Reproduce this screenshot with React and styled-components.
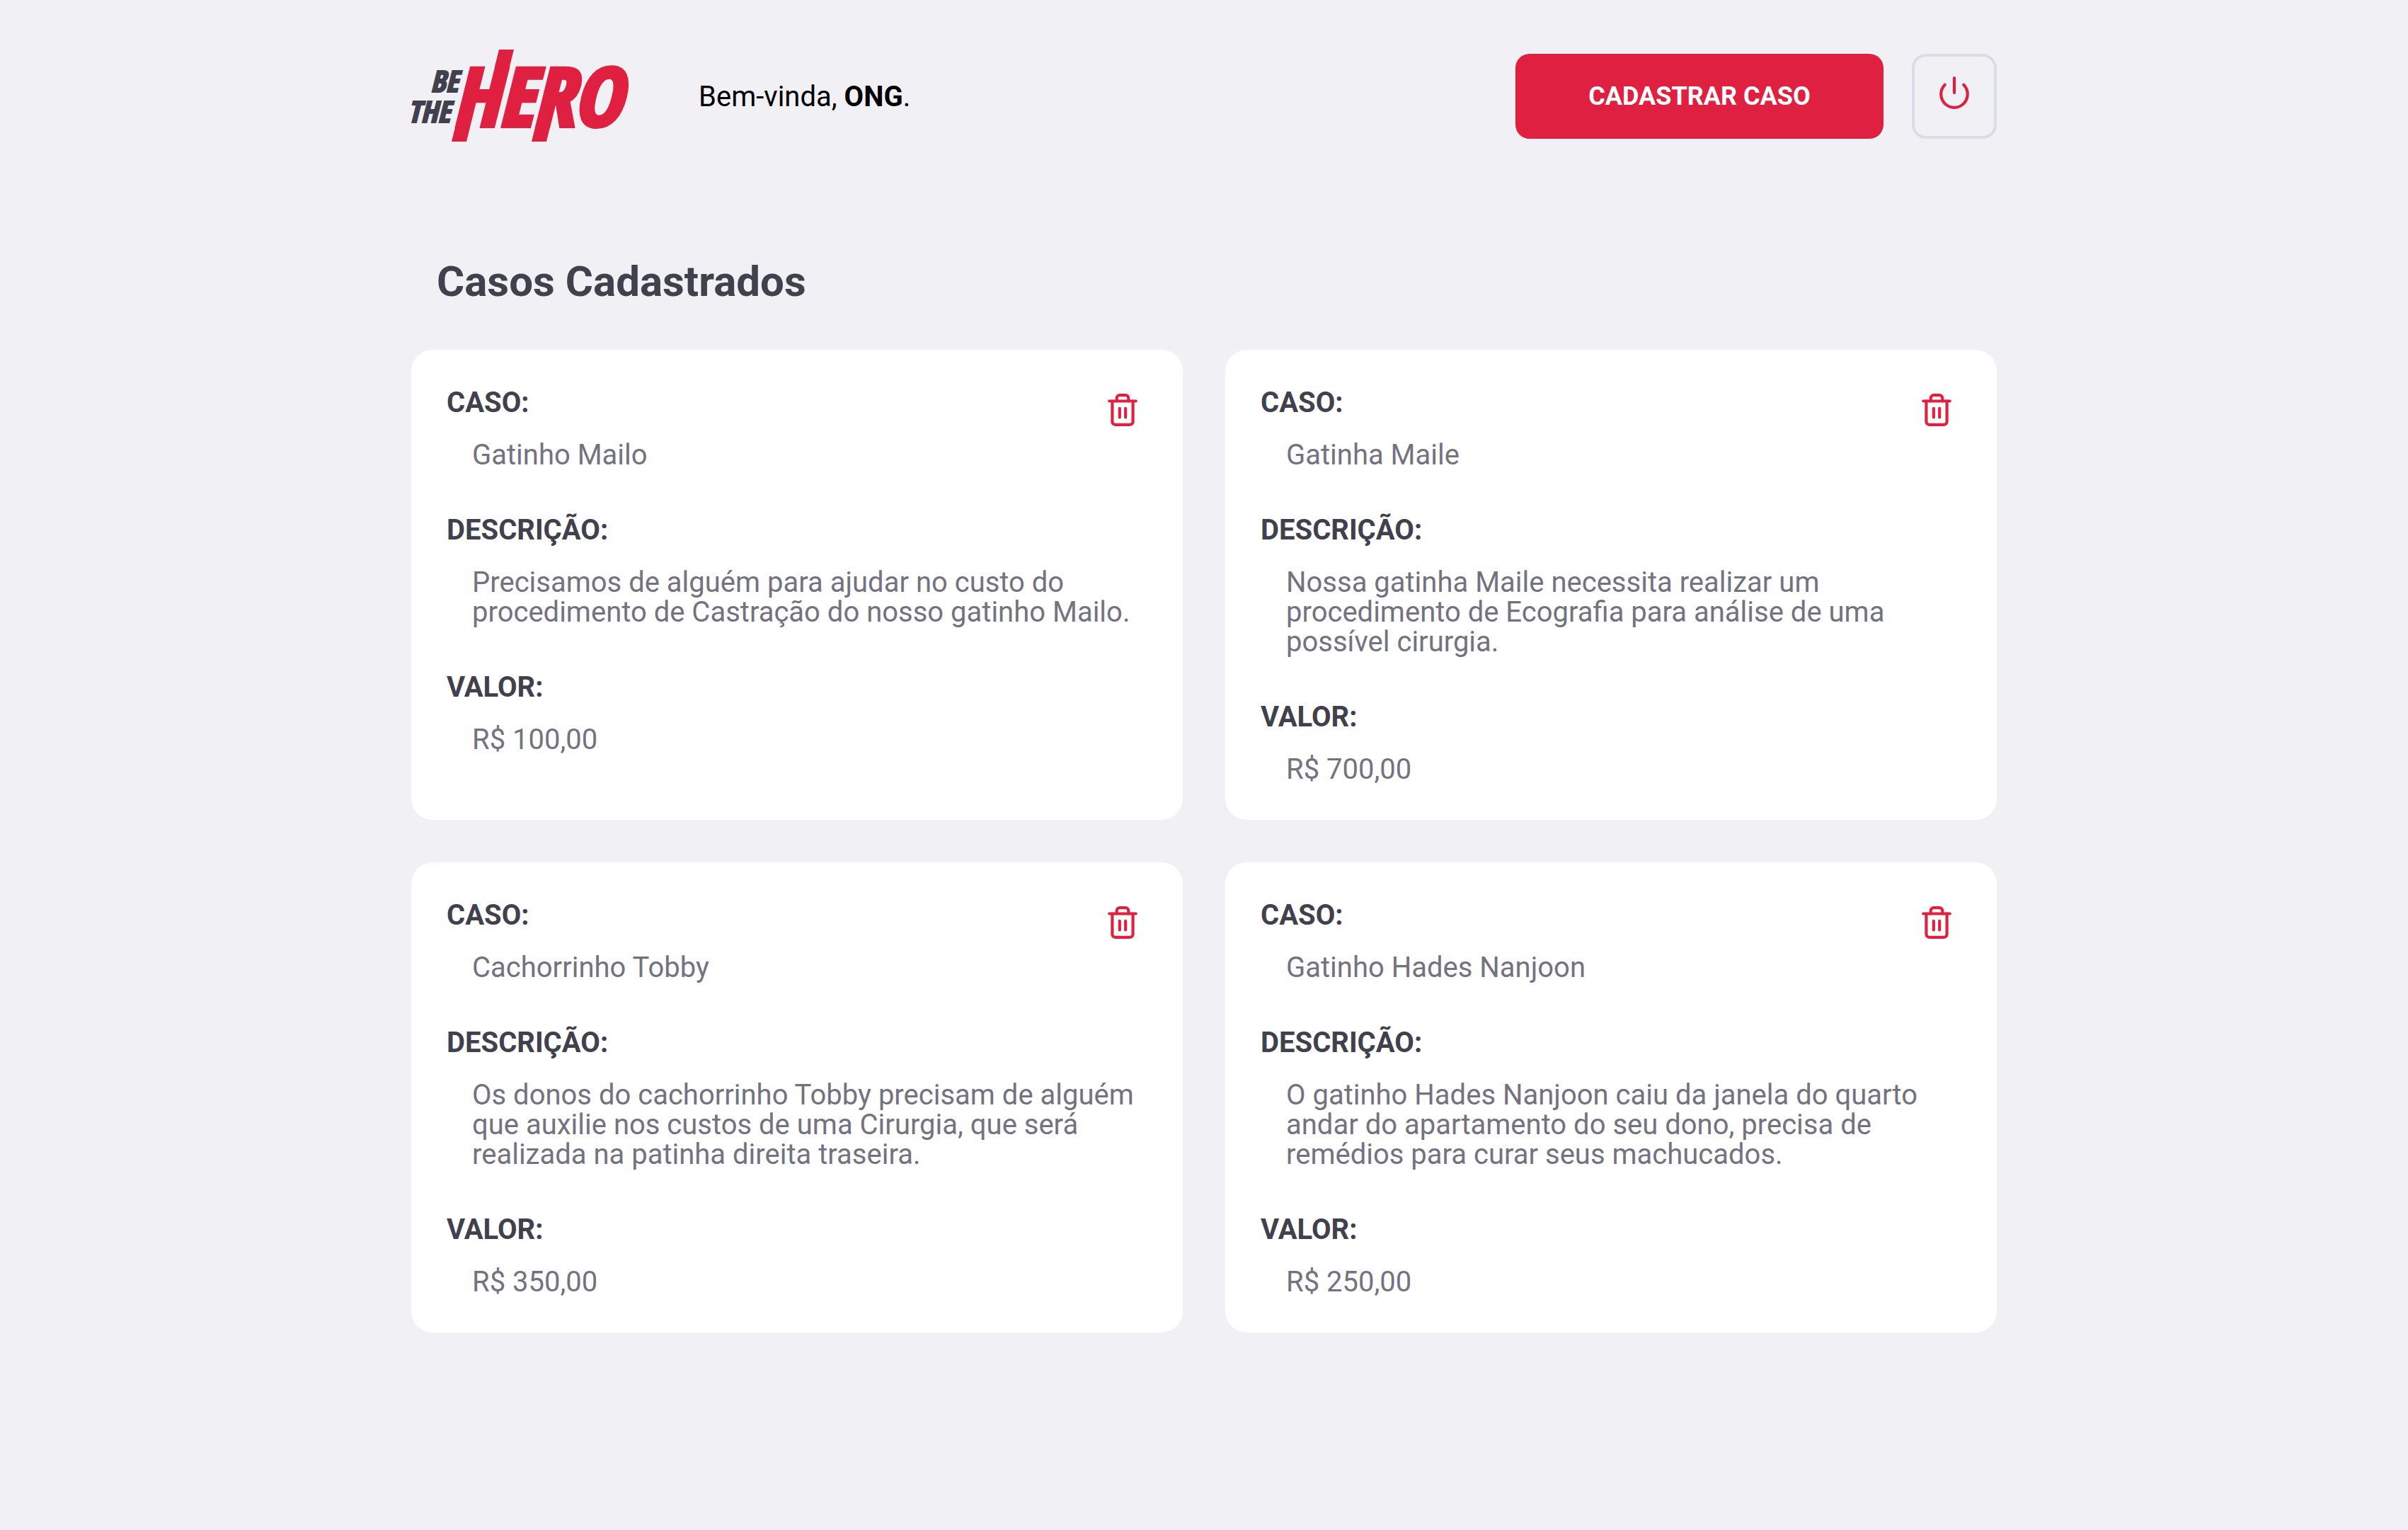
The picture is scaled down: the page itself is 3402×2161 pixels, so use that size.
import React from "react";
import styled, { createGlobalStyle } from "styled-components";
import { FiPower, FiTrash2 } from "react-icons/fi";

const GlobalStyle = createGlobalStyle`
  * { box-sizing: border-box; margin: 0; padding: 0; }
  body { background: #f0f0f5; font-family: Roboto, "Liberation Sans", sans-serif; font-size: 40px; color: #000; }
  button { font: inherit; cursor: pointer; border: 0; }
`;

const Page = styled.div`
  max-width: 2240px;
  margin: 0 auto;
  padding: 70px 0;
`;

const Header = styled.header`
  display: flex;
  align-items: center;
`;

const Logo = styled.svg`
  width: 306px;
  height: 132px;
  flex: none;
  overflow: visible;
  font-family: "Open Sans Condensed", "Open Sans", sans-serif;
  font-weight: 700;
  font-style: italic;
`;

const LogoHero = styled.text`
  fill: #e02041;
  stroke: #e02041;
  stroke-width: 6px;
  font-size: 114px;
`;

const LogoPrefix = styled.text`
  fill: #41414d;
  stroke: #41414d;
  stroke-width: 2px;
  font-size: 42px;
`;

const Welcome = styled.span`
  margin-left: 100px;
  padding-top: 2px;
  line-height: 48px;
`;

const Actions = styled.div`
  display: flex;
  gap: 40px;
  margin-left: auto;
`;

const RegisterLink = styled.a`
  width: 520px;
  height: 120px;
  border-radius: 20px;
  background: #e02041;
  color: #fff;
  font-size: 36px;
  font-weight: 700;
  line-height: 120px;
  text-align: center;
  text-decoration: none;
`;

const LogoutButton = styled.button`
  display: flex;
  justify-content: center;
  width: 120px;
  height: 120px;
  padding-top: 26px;
  border: 4px solid #dcdce6;
  border-radius: 20px;
  background: transparent;
  color: #e02041;
`;

const Title = styled.h1`
  margin: 166px 0 66px 36px;
  color: #41414d;
  font-size: 60px;
  line-height: 60px;
`;

const CaseGrid = styled.ul`
  display: grid;
  grid-template-columns: repeat(2, 1fr);
  gap: 60px;
  list-style: none;
`;

const CaseCard = styled.li`
  position: relative;
  padding: 54px 50px 50px;
  border-radius: 30px;
  background: #fff;
  line-height: 42px;
`;

const Label = styled.strong`
  display: block;
  margin-bottom: 32px;
  color: #41414d;
`;

const Value = styled.p`
  margin-left: 36px;
  color: #737380;

  & + ${Label} { margin-top: 64px; }
`;

const DeleteButton = styled.button`
  position: absolute;
  top: 60px;
  right: 60px;
  display: flex;
  background: transparent;
  color: #e02041;
`;

const cases = [
  { title: "Gatinho Mailo", description: "Precisamos de alguém para ajudar no custo do procedimento de Castração do nosso gatinho Mailo.", value: "R$ 100,00" },
  { title: "Gatinha Maile", description: "Nossa gatinha Maile necessita realizar um procedimento de Ecografia para análise de uma possível cirurgia.", value: "R$ 700,00" },
  { title: "Cachorrinho Tobby", description: "Os donos do cachorrinho Tobby precisam de alguém que auxilie nos custos de uma Cirurgia, que será realizada na patinha direita traseira.", value: "R$ 350,00" },
  { title: "Gatinho Hades Nanjoon", description: "O gatinho Hades Nanjoon caiu da janela do quarto andar do apartamento do seu dono, precisa de remédios para curar seus machucados.", value: "R$ 250,00" },
];

function BrandLogo() {
  return (
    <Logo viewBox="0 0 306 132" role="img" aria-label="Be The Hero">
      <LogoPrefix x="27" y="60">BE</LogoPrefix>
      <LogoPrefix x="-5" y="103">THE</LogoPrefix>
      <LogoHero x="58" y="108">HERO</LogoHero>
      {/* slanted bars that lengthen the wordmark's stems */}
      <g fill="#e02041">
        <path d="M124 0H145L139 24H118Z" />
        <path d="M62 110H83L78 130H57Z" />
        <path d="M175 110H196L191 130H170Z" />
      </g>
    </Logo>
  );
}

export default function App() {
  return (
    <>
      <GlobalStyle />
      <Page>
        <Header>
          <BrandLogo />
          <Welcome>Bem-vinda, <strong>ONG</strong>.</Welcome>
          <Actions>
            <RegisterLink href="#novo">CADASTRAR CASO</RegisterLink>
            <LogoutButton type="button" aria-label="Sair"><FiPower size={50} /></LogoutButton>
          </Actions>
        </Header>
        <Title>Casos Cadastrados</Title>
        <CaseGrid>
          {cases.map((item) => (
            <CaseCard key={item.title}>
              <Label>CASO:</Label>
              <Value>{item.title}</Value>
              <Label>DESCRIÇÃO:</Label>
              <Value>{item.description}</Value>
              <Label>VALOR:</Label>
              <Value>{item.value}</Value>
              <DeleteButton type="button" aria-label="Excluir caso"><FiTrash2 size={50} /></DeleteButton>
            </CaseCard>
          ))}
        </CaseGrid>
      </Page>
    </>
  );
}
